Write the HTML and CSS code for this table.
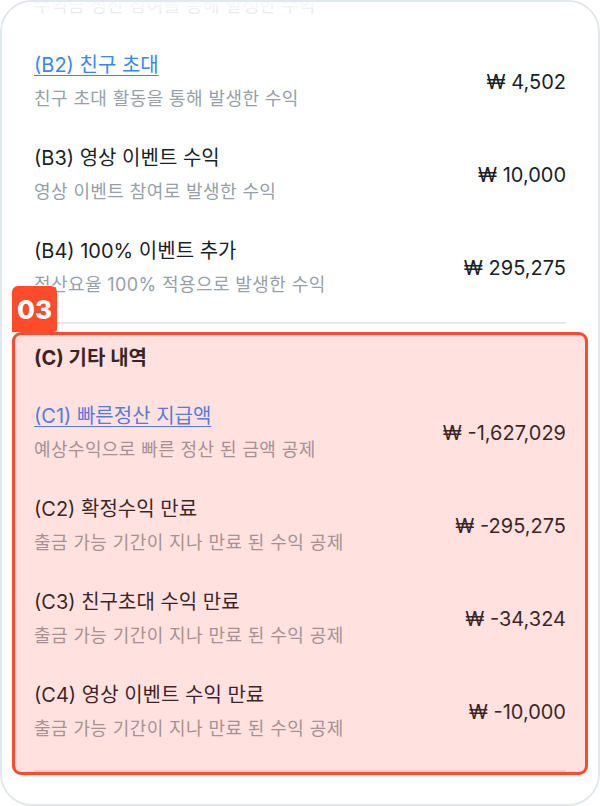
FILE: index.html
```html
<!DOCTYPE html>
<html lang="ko">
<head>
    <meta charset="UTF-8">
    <meta name="viewport" content="width=device-width, initial-scale=1.0">
    <title>수익 상세 내역</title>
    <link rel="stylesheet" href="styles.css">
</head>
<body>
    <div class="frame">
        <!-- soft fade where the list scrolls under the top edge -->
        <div class="fade"></div>

        <div class="list">
            <div class="row">
                <div>
                    <div class="row-title">(B1) 확정 수익</div>
                    <div class="row-desc">수익금 정산 참여를 통해 발생한 수익</div>
                </div>
                <div class="amount">₩ 12,000</div>
            </div>

            <div class="row">
                <div>
                    <div class="row-title"><a href="#">(B2) 친구 초대</a></div>
                    <div class="row-desc">친구 초대 활동을 통해 발생한 수익</div>
                </div>
                <div class="amount">₩ 4,502</div>
            </div>

            <div class="row">
                <div>
                    <div class="row-title">(B3) 영상 이벤트 수익</div>
                    <div class="row-desc">영상 이벤트 참여로 발생한 수익</div>
                </div>
                <div class="amount">₩ 10,000</div>
            </div>

            <div class="row">
                <div>
                    <div class="row-title">(B4) 100% 이벤트 추가</div>
                    <div class="row-desc">정산요율 100% 적용으로 발생한 수익</div>
                </div>
                <div class="amount">₩ 295,275</div>
            </div>

            <div class="divider"></div>

            <!-- (C) section, highlighted -->
            <section class="etc">
                <div class="badge">03</div>
                <div class="etc-head">(C) 기타 내역</div>

                <div class="row">
                    <div>
                        <div class="row-title"><a href="#">(C1) 빠른정산 지급액</a></div>
                        <div class="row-desc">예상수익으로 빠른 정산 된 금액 공제</div>
                    </div>
                    <div class="amount">₩ -1,627,029</div>
                </div>

                <div class="row">
                    <div>
                        <div class="row-title">(C2) 확정수익 만료</div>
                        <div class="row-desc">출금 가능 기간이 지나 만료 된 수익 공제</div>
                    </div>
                    <div class="amount">₩ -295,275</div>
                </div>

                <div class="row">
                    <div>
                        <div class="row-title">(C3) 친구초대 수익 만료</div>
                        <div class="row-desc">출금 가능 기간이 지나 만료 된 수익 공제</div>
                    </div>
                    <div class="amount">₩ -34,324</div>
                </div>

                <div class="row">
                    <div>
                        <div class="row-title">(C4) 영상 이벤트 수익 만료</div>
                        <div class="row-desc">출금 가능 기간이 지나 만료 된 수익 공제</div>
                    </div>
                    <div class="amount">₩ -10,000</div>
                </div>

                <div class="divider etc-end"></div>
            </section>
        </div>
    </div>
</body>
</html>
```

FILE: styles.css
```css
body {
    margin: 0;
    background-color: #fff;
    font-family: 'Inter', 'Noto Sans CJK KR', sans-serif;
}
.frame {
    width: 600px;
    height: 806px;
    box-sizing: border-box;
    border: 2px solid #e4e7eb;
    border-radius: 32px;
    background-color: #fff;
    overflow: hidden;
    position: relative;
}
.fade {
    position: absolute;
    top: 0;
    left: 0;
    right: 0;
    height: 22px;
    background: linear-gradient(rgba(255, 255, 255, 0.95), rgba(255, 255, 255, 0.6));
    z-index: 3;
}
.list {
    padding: 0 32px;
    margin-top: -60px;
}
/* One line of the earnings list */
.row {
    display: flex;
    justify-content: space-between;
    align-items: center;
    padding: 17px 0;
}
.row-title {
    font-size: 20px;
    line-height: 26px;
    color: #191f28;
}
.row-title a {
    color: #3a86f5;
    text-decoration: underline;
    text-decoration-thickness: 1px;
    text-underline-offset: 3px;
}
.row-desc {
    margin-top: 9px;
    font-size: 18px;
    line-height: 24px;
    letter-spacing: 0.4px;
    color: #989fa9;
}
.amount {
    font-size: 20px;
    color: #191f28;
}
.divider {
    height: 2px;
    margin-top: 8px;
    background-color: #e5e8eb;
}
/* Highlighted (C) block */
.etc {
    position: relative;
    margin-top: 8px;
    padding-bottom: 3px;
}
.etc::after {
    content: '';
    position: absolute;
    top: 0;
    bottom: 0;
    left: -22px;
    right: -22px;
    border: 3px solid #ff4a2c;
    border-radius: 9px;
    background-color: rgba(255, 60, 40, 0.15);
    pointer-events: none;
}
.etc-head {
    padding: 13px 0 14px;
    font-size: 20px;
    line-height: 27px;
    font-weight: 700;
    color: #191f28;
}
.etc-end {
    margin-top: 12px;
}
.badge {
    position: absolute;
    top: -46px;
    left: -22px;
    width: 45px;
    height: 46px;
    display: flex;
    justify-content: center;
    align-items: center;
    border-radius: 6px 6px 3px 0;
    background-color: #ff4a2c;
    color: #fff;
    font-size: 26px;
    font-weight: 800;
    z-index: 2;
}
```
